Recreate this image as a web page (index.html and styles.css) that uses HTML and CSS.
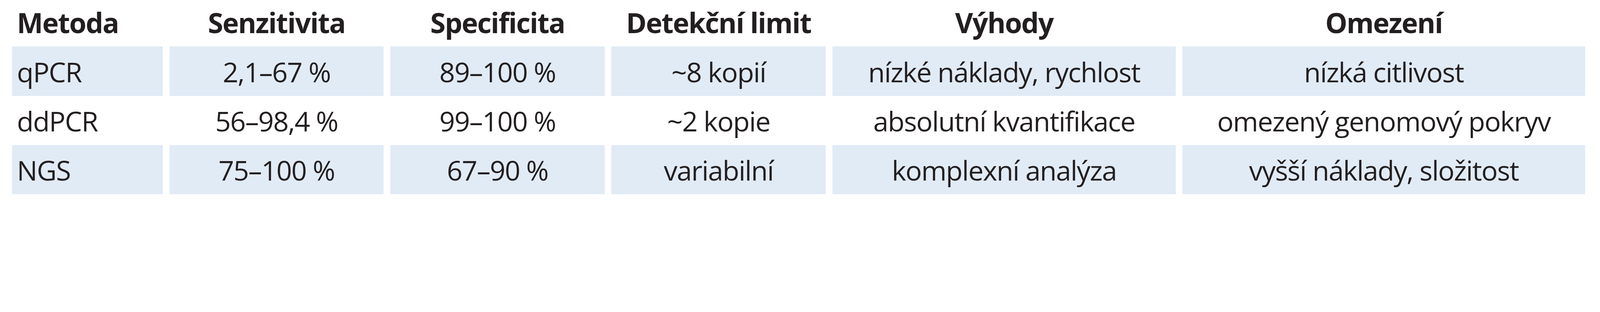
FILE: index.html
```html
<!DOCTYPE html>
<html lang="cs">
<head>
<meta charset="utf-8">
<title>Srovnání metod</title>
<link rel="stylesheet" href="styles.css">
</head>
<body>
<div class="table">
  <div class="cell head first">Metoda</div>
  <div class="cell head">Senzitivita</div>
  <div class="cell head">Specificita</div>
  <div class="cell head">Detekční limit</div>
  <div class="cell head">Výhody</div>
  <div class="cell head">Omezení</div>

  <div class="cell shade first">qPCR</div>
  <div class="cell shade">2,1–67 %</div>
  <div class="cell shade">89–100 %</div>
  <div class="cell shade">~8 kopií</div>
  <div class="cell shade">nízké náklady, rychlost</div>
  <div class="cell shade">nízká citlivost</div>

  <div class="cell first">ddPCR</div>
  <div class="cell">56–98,4 %</div>
  <div class="cell">99–100 %</div>
  <div class="cell">~2 kopie</div>
  <div class="cell">absolutní kvantifikace</div>
  <div class="cell">omezený genomový pokryv</div>

  <div class="cell shade first">NGS</div>
  <div class="cell shade">75–100 %</div>
  <div class="cell shade">67–90 %</div>
  <div class="cell shade">variabilní</div>
  <div class="cell shade">komplexní analýza</div>
  <div class="cell shade">vyšší náklady, složitost</div>
</div>
</body>
</html>
```

FILE: styles.css
```css
html, body {
  margin: 0;
  padding: 0;
  background: #ffffff;
}

body {
  font-family: "Open Sans", "Noto Sans", sans-serif;
  color: #231f20;
}

.table {
  display: grid;
  grid-template-columns: 385.33px 548px 548.67px 548.67px 878.67px 1030.67px;
  grid-template-rows: 119.33px 126.67px 126px 126px;
  column-gap: 17.33px;
  padding-left: 31.33px;
}

.cell {
  display: flex;
  align-items: center;
  justify-content: center;
  font-size: 70px;
  line-height: 1;
  letter-spacing: -1.7px;
  white-space: nowrap;
  padding-top: 2px;
  box-sizing: border-box;
}

.cell.first {
  justify-content: flex-start;
  padding-left: 12px;
}

.head {
  font-weight: 700;
  font-size: 71px;
  letter-spacing: -1.9px;
  padding-top: 0;
  padding-bottom: 4px;
}

.shade {
  background: #e1ebf6;
}
```
